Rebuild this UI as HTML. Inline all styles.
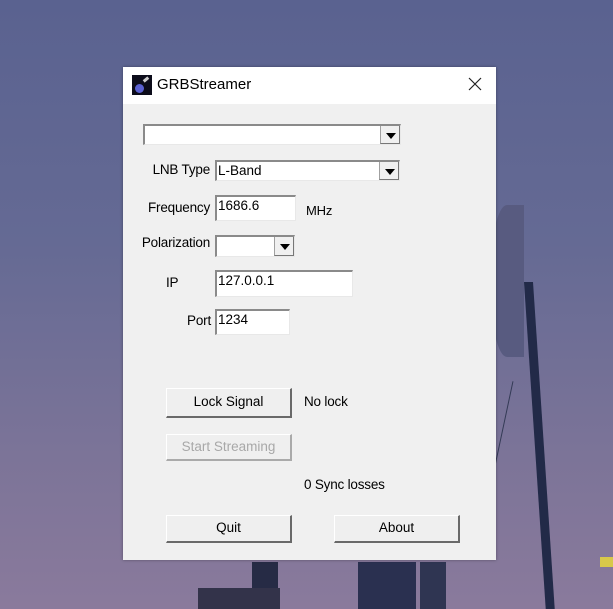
<!DOCTYPE html>
<html style="overflow:hidden"><head><style>
html,body{overflow:hidden}
body{margin:0;width:613px;height:609px;position:relative;background:linear-gradient(180deg,#5a6290 0%,#656a94 40%,#7c7498 75%,#8a7a9c 100%);font-family:"Liberation Sans",sans-serif;font-size:13px;color:#000}
.a{position:absolute}
.win{left:123px;top:67px;width:373px;height:493px;background:#f0f0f0;box-shadow:0 0 3px rgba(0,0,0,.35)}
.title{left:0;top:0;width:373px;height:37px;background:#fff}
.in{position:absolute;background:#fff;border-top:2px solid #8a8a8a;border-left:2px solid #8a8a8a;border-right:1px solid #e8e8e8;border-bottom:1px solid #e8e8e8;box-sizing:border-box;padding-left:1px;line-height:18px}
.dd{position:absolute;right:0;top:0;bottom:0;width:20px;background:#f0f0f0;border-left:1px solid #a0a0a0;border-bottom:1px solid #777;border-right:1px solid #777;box-sizing:border-box}
.dd:after{content:"";position:absolute;left:5px;top:7px;border-left:5px solid transparent;border-right:5px solid transparent;border-top:6px solid #000}
.btn{position:absolute;box-sizing:border-box;background:#efefef;border-top:1px solid #fff;border-left:1px solid #fff;border-right:2px solid #696969;border-bottom:2px solid #696969;text-align:center;font-size:13.5px}
.lbl{position:absolute;font-size:13.5px;white-space:nowrap;letter-spacing:-0.2px}
</style></head><body>
<div class="a" style="left:490px;top:205px;width:34px;height:152px;border-radius:50% 0 0 50%;background:#585b80"></div>
<div class="a" style="left:524px;top:282px;width:9px;height:330px;background:#222a48;transform:skewX(3.8deg);transform-origin:top"></div>
<div class="a" style="left:500px;top:380px;width:1px;height:120px;background:#333a55;transform:rotate(12deg)"></div>
<div class="a" style="left:252px;top:562px;width:26px;height:47px;background:#262b45"></div>
<div class="a" style="left:198px;top:588px;width:82px;height:21px;background:#33334a"></div>
<div class="a" style="left:358px;top:562px;width:58px;height:47px;background:#2a3050"></div>
<div class="a" style="left:420px;top:562px;width:26px;height:47px;background:#2f3552"></div>
<div class="a" style="left:600px;top:557px;width:13px;height:10px;background:#d8c84a"></div>
<div class="a win">
 <div class="a title">
  <div class="a" style="left:9px;top:8px;width:20px;height:20px;background:#0c0c1a"><div class="a" style="left:3px;top:9px;width:9px;height:9px;border-radius:50%;background:#5a60d0"></div><div class="a" style="left:11px;top:3px;width:6px;height:3px;background:#ccc;transform:rotate(-40deg)"></div></div>
  <div class="a" style="left:34px;top:9px;font-size:15px">GRBStreamer</div>
  <svg class="a" style="left:345px;top:10px" width="14" height="14"><path d="M1 1L13 13M13 1L1 13" stroke="#222" stroke-width="1.2"/></svg>
 </div>
 <div class="in" style="left:20px;top:57px;width:258px;height:21px"><div class="dd"></div></div>
 <div class="lbl" style="right:286px;top:95px">LNB Type</div>
 <div class="in" style="left:92px;top:93px;width:185px;height:21px;font-size:13.5px">L-Band<div class="dd"></div></div>
 <div class="lbl" style="right:286px;top:133px">Frequency</div>
 <div class="in" style="left:92px;top:128px;width:81px;height:26px;font-size:13.5px">1686.6</div>
 <div class="lbl" style="left:183px;top:136px;font-size:13px">MHz</div>
 <div class="lbl" style="right:286px;top:168px">Polarization</div>
 <div class="in" style="left:92px;top:168px;width:80px;height:22px"><div class="dd"></div></div>
 <div class="lbl" style="left:43px;top:208px">IP</div>
 <div class="in" style="left:92px;top:203px;width:138px;height:27px;font-size:13.5px">127.0.0.1</div>
 <div class="lbl" style="right:285px;top:246px">Port</div>
 <div class="in" style="left:92px;top:242px;width:75px;height:26px;font-size:13.5px">1234</div>
 <div class="btn" style="left:43px;top:321px;width:126px;height:30px;line-height:26px">Lock Signal</div>
 <div class="lbl" style="left:181px;top:327px">No lock</div>
 <div class="btn" style="left:43px;top:367px;width:126px;height:27px;line-height:23px;color:#a8a8a8;border-right-color:#aaa;border-bottom-color:#aaa">Start Streaming</div>
 <div class="lbl" style="left:181px;top:410px">0 Sync losses</div>
 <div class="btn" style="left:43px;top:448px;width:126px;height:28px;line-height:24px">Quit</div>
 <div class="btn" style="left:211px;top:448px;width:126px;height:28px;line-height:24px">About</div>
</div>
</body></html>
